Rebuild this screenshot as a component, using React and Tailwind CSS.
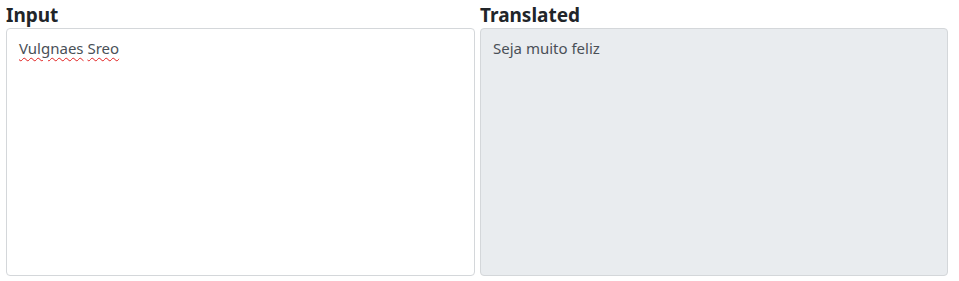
export default function App() {
  return (
    <div className="w-[959px] h-[281px] bg-white pt-[3px] pl-[6px] text-[#212529]" style={{ fontFamily: '"Noto Sans", "Segoe UI", sans-serif' }}>
      <div className="grid grid-cols-[469px_468px] gap-x-[5px]">
        <div className="flex flex-col">
          <h5 className="text-[19px] font-bold leading-[25px] text-[#212529]">Input</h5>
          <div className="h-[248px] border border-[#d4d7da] rounded-[4px] bg-white px-[12px] py-[7px] text-[15px] leading-[24px] text-[#495057]">
            <span className="underline decoration-wavy decoration-[#e02020] decoration-[1px] underline-offset-[3px]">Vulgnaes</span>{' '}
            <span className="underline decoration-wavy decoration-[#e02020] decoration-[1px] underline-offset-[3px]">Sreo</span>
          </div>
        </div>
        <div className="flex flex-col">
          <h5 className="text-[19px] font-bold leading-[25px] text-[#212529]">Translated</h5>
          <div className="h-[248px] border border-[#d4d7da] rounded-[4px] bg-[#e9ecef] px-[12px] py-[7px] text-[15px] leading-[24px] text-[#495057]">
            Seja muito feliz
          </div>
        </div>
      </div>
    </div>
  );
}
